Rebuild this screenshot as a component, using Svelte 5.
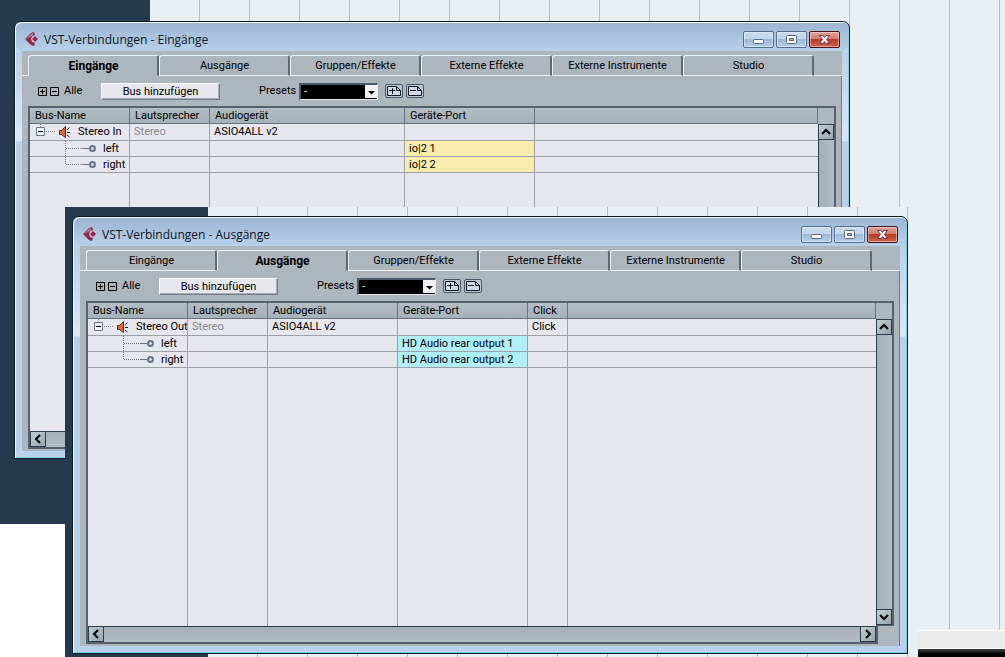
<script lang="ts">
	type Column = { label: string; width: number | null };
	type Port = { name: string; port: string };
	type Connection = {
		id: string;
		title: string;
		tab: string;
		bus: string;
		columns: Column[];
		cells: string[];
		ports: Port[];
	};

	const tabs = ['Eingänge', 'Ausgänge', 'Gruppen/Effekte', 'Externe Effekte', 'Externe Instrumente', 'Studio'];

	const inputs: Connection = {
		id: 'in',
		title: 'VST-Verbindungen - Eingänge',
		tab: 'Eingänge',
		bus: 'Stereo In',
		columns: [
			{ label: 'Bus-Name', width: 100 },
			{ label: 'Lautsprecher', width: 80 },
			{ label: 'Audiogerät', width: 195 },
			{ label: 'Geräte-Port', width: 130 },
			{ label: '', width: null },
		],
		cells: ['Stereo', 'ASIO4ALL v2', '', ''],
		ports: [
			{ name: 'left', port: 'io|2 1' },
			{ name: 'right', port: 'io|2 2' },
		],
	};

	const outputs: Connection = {
		id: 'out',
		title: 'VST-Verbindungen - Ausgänge',
		tab: 'Ausgänge',
		bus: 'Stereo Out',
		columns: [
			{ label: 'Bus-Name', width: 100 },
			{ label: 'Lautsprecher', width: 80 },
			{ label: 'Audiogerät', width: 130 },
			{ label: 'Geräte-Port', width: 130 },
			{ label: 'Click', width: 40 },
			{ label: '', width: null },
		],
		cells: ['Stereo', 'ASIO4ALL v2', '', 'Click', ''],
		ports: [
			{ name: 'left', port: 'HD Audio rear output 1' },
			{ name: 'right', port: 'HD Audio rear output 2' },
		],
	};

	let active: Record<string, string> = $state({ in: inputs.tab, out: outputs.tab });
	let open: Record<string, boolean> = $state({ in: true, out: true });
</script>

{#snippet chevron(d: string)}
	<svg width="14" height="14" viewBox="0 0 14 14"><path {d} fill="none" stroke="#000" stroke-width="2" /></svg>
{/snippet}

{#snippet connectionWindow(win: Connection)}
	<section class="window {win.id}" aria-label={win.title}>
		<header class="titlebar">
			<svg class="logo" width="14" height="15" viewBox="0 0 14 15">
				<path d="M0 7 6 1 9 0 10 3 7 4 6 7 7 10 10 11 9 14 6 13Z" fill="#8f2745" />
				<path d="M1 7 6 2 8 1 8 3 5 5Z" fill="#b9788b" />
				<path d="M10 4 13 7 10 10 7 7Z" fill="#a32242" />
			</svg>
			<h2>{win.title}</h2>
			<div class="controls">
				<button aria-label="Minimieren">
					<svg width="29" height="15" viewBox="0 0 29 15"><rect x="9.5" y="7.5" width="10" height="4" rx="1" fill="#fff" stroke="#536780" /></svg>
				</button>
				<button aria-label="Maximieren">
					<svg width="29" height="15" viewBox="0 0 29 15">
						<rect x="9.5" y="3.5" width="10" height="8" rx="1" fill="#fff" stroke="#536780" />
						<rect x="12.5" y="6.5" width="4" height="2" fill="#a8c0dc" stroke="#536780" />
					</svg>
				</button>
				<button class="close" aria-label="Schließen">
					<svg width="29" height="15" viewBox="0 0 29 15">
						<path d="M9.500 3.500H13L14.500 5.500 16 3.500H19.500L16.500 7.500 19.500 11.500H16L14.500 9.500 13 11.500H9.500L12.500 7.500Z" fill="#fff" stroke="#633843" />
					</svg>
				</button>
			</div>
		</header>

		<div class="content">
			<div class="tabs" role="tablist">
				{#each tabs as tab (tab)}
					<button role="tab" class="tab" class:active={active[win.id] === tab} aria-selected={active[win.id] === tab} onclick={() => (active[win.id] = tab)}>{tab}</button>
				{/each}
				<span class="tab-rest"></span>
			</div>

			<div class="panel">
				<div class="toolbar">
					<button class="fold" aria-label="Alle öffnen" onclick={() => (open[win.id] = true)}>
						<svg width="9" height="9" viewBox="0 0 9 9"><path d="M.5.5H8.500V8.500H.5ZM2 4.500H7M4.500 2V7" fill="none" stroke="#000" /></svg>
					</button>
					<button class="fold" aria-label="Alle schließen" onclick={() => (open[win.id] = false)}>
						<svg width="9" height="9" viewBox="0 0 9 9"><path d="M.5.5H8.500V8.500H.5ZM2 4.500H7" fill="none" stroke="#000" /></svg>
					</button>
					<span class="all">Alle</span>
					<button class="add">Bus hinzufügen</button>
					<label class="presets-label" for="presets-{win.id}">Presets</label>
					<span class="presets">
						<select id="presets-{win.id}"><option>-</option></select>
						<svg width="12" height="13" viewBox="0 0 12 13"><rect width="12" height="13" fill="#f1f2f5" /><path d="M3 6H10L6.500 9.500Z" fill="#000" /></svg>
					</span>
					<button class="preset" aria-label="Preset speichern">
						<svg width="16" height="12" viewBox="0 0 16 12"><path d="M1.500 1.500H10.500L14.500 5.500V10.500H1.500ZM10.500 1.500V5.500H14.500" fill="#d3d8e4" stroke="#111827" /><path d="M3 5.500H9M6.500 3V9" stroke="#111827" /></svg>
					</button>
					<button class="preset" aria-label="Preset löschen">
						<svg width="16" height="12" viewBox="0 0 16 12"><path d="M1.500 1.500H10.500L14.500 5.500V10.500H1.500ZM10.500 1.500V5.500H14.500" fill="#d3d8e4" stroke="#111827" /><path d="M3 5.500H9" stroke="#111827" /></svg>
					</button>
				</div>

				<div class="list">
					<div class="view">
						<table>
							<colgroup>
								{#each win.columns as col}
									<col style={col.width ? `width: ${col.width}px` : undefined} />
								{/each}
							</colgroup>
							<thead>
								<tr>
									{#each win.columns as col}
										<th scope="col">{col.label}</th>
									{/each}
								</tr>
							</thead>
							<tbody>
								<tr class="bus">
									<td class="tree">
										<div class="node">
											<button class="twist" aria-label="{win.bus} auf- oder zuklappen" onclick={() => (open[win.id] = !open[win.id])}>
												<svg width="48" height="16" viewBox="0 0 48 16">
													<path d="M10.500 0V3M16 7.500H25" stroke="#888" stroke-dasharray="1 1" />
													<path d="M6.500 3.500H14.500V11.500H6.500Z" fill="#f4f4f8" stroke="#6d7780" />
													<path d="M8 7.500H13" stroke="#000" />
													<path d="M29.500 6.500H31.500L35.500 2.500V13.500L31.500 10.500H29.500Z" fill="#db6a3c" stroke="#5a2a1b" />
													<path d="M37 6 39.500 3.500M37 8.500H40M37 11 39.500 13" fill="none" stroke="#222" />
												</svg>
											</button>
											<span>{win.bus}</span>
										</div>
									</td>
									{#each win.cells as cell, i}
										<td class:muted={i === 0}>{cell}</td>
									{/each}
								</tr>
								{#if open[win.id]}
									{#each win.ports as port, i (port.name)}
										<tr class="port">
											<td class="tree">
												<div class="node">
													<svg width="73" height="15" viewBox="0 0 73 15">
														<path d={i === win.ports.length - 1 ? 'M35.500 0V8M36 7.500H51' : 'M35.500 0V15M36 7.500H51'} fill="none" stroke="#777" stroke-dasharray="1 1" />
														<path d="M52 7.500H59" stroke="#687587" />
														<circle cx="62.500" cy="7.500" r="2.500" fill="#d8dce4" stroke="#687587" stroke-width="2" />
													</svg>
													<span>{port.name}</span>
												</div>
											</td>
											<td></td>
											<td></td>
											<td class="device">{port.port}</td>
											{#each win.columns.slice(4) as _}
												<td></td>
											{/each}
										</tr>
									{/each}
								{/if}
								<tr class="filler">
									{#each win.columns as _}
										<td></td>
									{/each}
								</tr>
							</tbody>
						</table>
					</div>
					<div class="vscroll">
						<button aria-label="Nach oben">{@render chevron('M3 9 7 5 11 9')}</button>
						<button aria-label="Nach unten">{@render chevron('M3 5 7 9 11 5')}</button>
					</div>
					<div class="hscroll">
						<button aria-label="Nach links">{@render chevron('M9 3 5 7 9 11')}</button>
						<button aria-label="Nach rechts">{@render chevron('M5 3 9 7 5 11')}</button>
					</div>
				</div>
			</div>
		</div>
	</section>
{/snippet}

<main class="desktop">
	<div class="screen back">
		<div class="dark"></div>
		<div class="grid"></div>
		<div class="dock"></div>
		{@render connectionWindow(inputs)}
	</div>
	<div class="screen front">
		<div class="dark"></div>
		<div class="grid"></div>
		{@render connectionWindow(outputs)}
	</div>
</main>

<style>
:global(body) { margin: 0; background: #fff; }

.desktop {
	position: relative; height: 100vh; min-height: 657px; overflow: hidden;
	font: 11px/16px Roboto, "Liberation Sans", sans-serif; color: #000;
}
button, select { font: inherit; color: inherit; margin: 0; padding: 0; border: 0; border-radius: 0; background: none; }
svg { display: block; flex-shrink: 0; }

/* two overlapping project screens */
.screen { position: absolute; display: flex; overflow: hidden; }
.back { inset: 0; }
.front { inset: 207px 87px 0 65px; }
.dark { background: #263a4d; flex-shrink: 0; }
.back .dark { width: 150px; height: 524px; }
.front .dark { width: 143px; }
.grid {
	flex: 1;
	background: repeating-linear-gradient(to right, #eaeff3 0 49px, #b6bec4 49px 50px);
}
.dock {
	position: absolute; right: 0; bottom: 0; width: 87px; height: 27px; box-sizing: border-box;
	background: linear-gradient(#fff 0 1px, #ebebeb 1px 18px, #fff 18px 19px, #333 19px 20px, #000 24px);
}

.window {
	position: absolute; box-sizing: border-box;
	padding: 0 7px 7px;
	border: 1px solid #0c1a26; border-radius: 7px 7px 0 0;
	background:
		linear-gradient(#9ab5d3, #b9d1ea) top / 100% 30px no-repeat,
		linear-gradient(#b9d1ea 30px, #dbe8f6 119px, #b9d1ea 120px);
	box-shadow: inset 1px 1px #f4f9fd, inset -1px -1px #7fd0e6;
}
.window.in { top: 21px; left: 14px; right: 155px; }
.window.out { top: 9px; left: 7px; right: 10px; }

.titlebar { display: flex; align-items: center; height: 29px; padding: 6px 2px 0 3px; box-sizing: border-box; }
.titlebar h2 {
	margin: 0 0 0 5px; flex: 1;
	font: 12px/16px "Open Sans", "Noto Sans", sans-serif; color: #10151f;
}
.controls { display: flex; gap: 2px; }
.controls button {
	box-sizing: border-box; width: 31px; height: 17px;
	border: 1px solid #566d8c; border-radius: 2px;
	background: linear-gradient(#c4d7ec 0 50%, #9cb8d6 50%, #b6d0ea);
	box-shadow: inset 0 0 0 1px rgba(255,255,255,.4);
}
.controls .close { border-color: #4c1420; background: linear-gradient(#e0a197 0, #d2796c 50%, #b93a27 50%, #d2674f); }

.content { background: #aeb6bd; padding-top: 4px; }

.tabs { display: flex; padding-left: 6px; background: linear-gradient(#eef1f3, #eef1f3) left bottom / 6px 1px no-repeat; }
.tab {
	flex: 0 1 131px; height: 21px; box-sizing: border-box; padding-left: 1px;
	border: solid #eef1f3; border-width: 1px 2px 1px 1px; border-right-color: #62696e;
	border-radius: 3px 3px 0 0;
}
.tab.active { border-bottom-color: transparent; font-size: 12px; font-weight: 700; }
.tab-rest { flex: 1; border-bottom: 1px solid #eef1f3; }

.panel { padding: 0 5px 2px 6px; border-right: 1px solid #6f7b86; }
.toolbar { display: flex; align-items: center; height: 30px; padding-left: 10px; }
.fold { margin-right: 3px; }
.all { width: 35px; margin-left: 2px; }
.add {
	width: 119px; height: 17px; box-sizing: border-box; margin-left: 2px;
	background: #e6e7ec; border: 1px solid; border-color: #fff #6f7b86 #6f7b86 #fff;
	box-shadow: inset -1px -1px #a7adb4;
	line-height: 15px;
}
.presets-label { margin-left: 39px; width: 40px; }
.presets { position: relative; display: flex; }
.presets select {
	appearance: none; width: 79px; height: 17px; padding-left: 3px;
	background: #000; color: #fff; line-height: 13px;
	border: solid; border-width: 2px 1px 1px 2px; border-color: #4a5a68 #e6e9ec #e6e9ec #4a5a68;
}
.presets svg { position: absolute; right: 1px; top: 2px; pointer-events: none; }
.preset {
	margin-left: 7px; box-sizing: border-box; width: 18px; height: 14px;
	border: 1px solid #4b5666; border-radius: 2px; background: #bfc6d2;
}
.preset + .preset { margin-left: 3px; }

.list { display: grid; grid-template-columns: minmax(0, 1fr) 18px; }
.view { border: solid #55626d; border-width: 2px 0 0 2px; }
table { width: 100%; height: 323px; border-collapse: separate; border-spacing: 0; table-layout: fixed; background: #e6e6ee; }
th, td {
	padding: 0 0 0 4px; text-align: left; font-weight: 400; white-space: nowrap; overflow: hidden;
	border-right: 1px solid #9b9fa6; border-bottom: 1px solid #9b9fa6;
}
th {
	height: 15px; padding-left: 5px; line-height: 15px;
	background: linear-gradient(#b3bdc3, #a5b1b8);
	border-color: #66727c;
}
td:last-child { border-right: 0; }
.bus td { height: 16px; line-height: 16px; }
.port td { height: 15px; line-height: 15px; }
.filler td { border-bottom: 0; }
td.muted { color: #858990; }
td.tree { padding: 0; }
.node { display: flex; align-items: center; }
.in .device { background: #f9ecac; }
.out .device { background: #b0eef8; }

.vscroll {
	display: flex; flex-direction: column; justify-content: space-between;
	border: solid #55626d; border-width: 2px 2px 1px 0;
	padding-top: 16px;
	background: linear-gradient(#aeb8bf, #aeb8bf) top / 100% 16px no-repeat, linear-gradient(to right, #2e3d4b 1px, #a4afba 1px, #b4bbc2);
}
.hscroll {
	display: flex; justify-content: space-between; margin-right: -2px;
	border: solid #55626d; border-width: 0 2px 2px;
	background: linear-gradient(#2e3d4b 1px, #a4afba 1px, #b4bbc2);
}
.vscroll button, .hscroll button {
	width: 16px; height: 16px; box-sizing: border-box;
	border: 1px solid #2e3d4b; background: linear-gradient(135deg, #c3cdd3, #96a5ae);
}
</style>
